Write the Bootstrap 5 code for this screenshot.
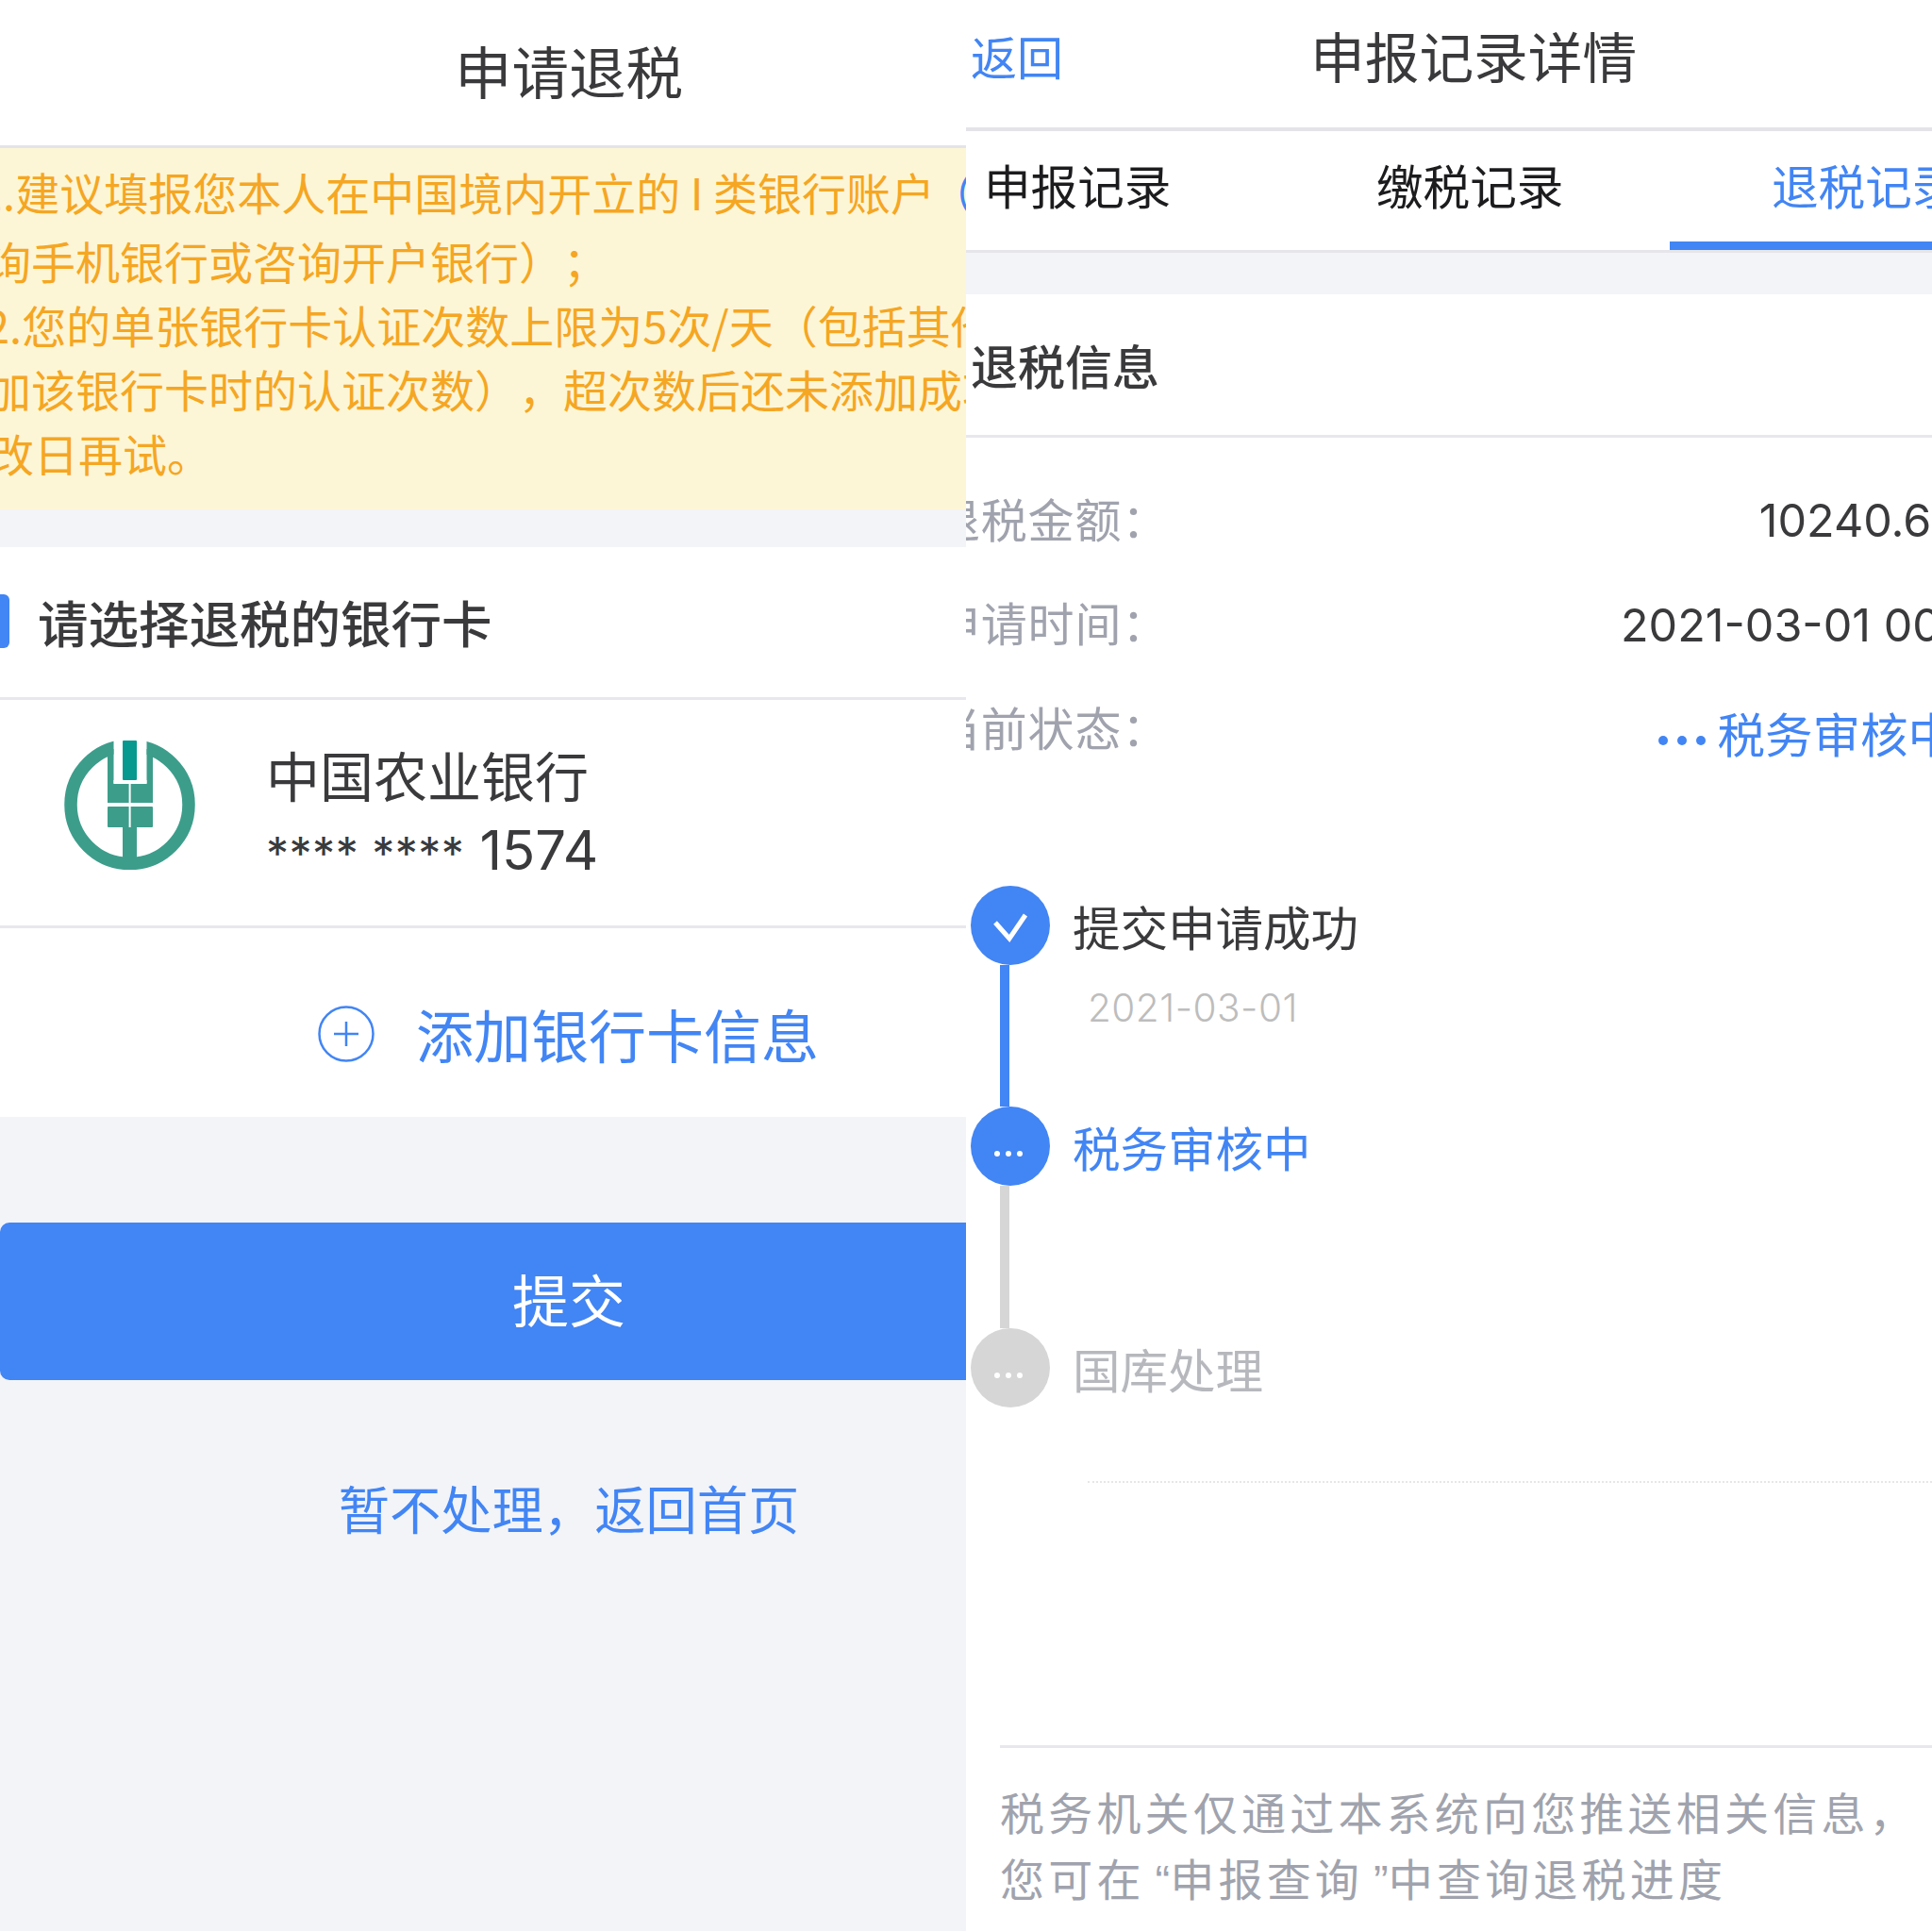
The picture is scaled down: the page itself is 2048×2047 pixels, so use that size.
<!DOCTYPE html>
<html lang="zh">
<head>
<meta charset="utf-8">
<title>申请退税</title>
<link href="https://cdn.jsdelivr.net/npm/bootstrap@5.3.0/dist/css/bootstrap.min.css" rel="stylesheet">
<style>
:root{--blue:#4285f4;--ink:#3a3a3c;--mute:#a0a3ad;--soft:#f3f4f8;--hair:#e8e8ec}
html,body{margin:0;height:2047px;overflow:hidden;background:#fff}
body{font-family:"Noto Sans CJK SC","Noto Sans",sans-serif;color:var(--ink);font-weight:400;text-spacing-trim:space-all}
.pane{width:1024px;height:2047px;overflow:hidden;flex:none}
.pane-l{background:var(--soft)}
.inner-l{width:1206px}
.top-l{height:157px;background:#fff;border-bottom:3px solid #e4e4e8;font-size:60.5px;padding-bottom:6px}
.warn{height:383px;background:#fdf6d6;color:#f5a623;font-size:47px;line-height:68.2px;padding-top:12px;white-space:nowrap}
.warn div:first-child{margin-bottom:4.5px}
.w1{margin-left:-23px}.w2{margin-left:-14px}.w3{margin-left:-16px}.w4{margin-left:-14px}.w5{margin-left:-11px}
.paren{color:var(--blue);margin-left:-16px}
.sect-l{margin-top:40px;height:162px;background:#fff;border-bottom:3px solid var(--hair);font-size:53.5px;font-weight:500}
.tick{width:10px;height:57px;background:var(--blue);border-radius:0 6px 6px 0;margin-right:30px;margin-top:-2px}
.bank{height:242px;background:#fff;border-bottom:3px solid var(--hair);padding-left:68px}
.logo{width:139px;height:138px;margin-right:75px;margin-top:-18px}
.bank-name{font-size:57px;line-height:78px;margin-top:2px}
.bank-no{font-size:58px;line-height:78px;margin-top:3px;font-family:"Inter","Noto Sans CJK SC",sans-serif}
.stars{font-size:48px;letter-spacing:.5px;margin-right:16px}
.add{height:200px;background:#fff;color:var(--blue);font-size:61px;padding-left:337px;padding-top:24px}
.add svg{width:60px;height:60px;margin-right:44px}
.submit{margin-top:112px;height:167px;width:1024px;background:var(--blue);color:#fff;font-size:60px;border:0;border-radius:10px 0 0 10px;padding:0 0 8px 0;display:block}
.submit span{display:block;width:1206px;text-align:center}
.later{margin-top:95px;color:var(--blue);font-size:54.3px;text-align:center;line-height:80px;text-decoration:none;display:block}
.pane-r{background:#fff}
.top-r{height:139px;border-bottom:4px solid #e4e4e8;padding-left:5px;padding-bottom:18px}
.back{color:var(--blue);font-size:49px;width:360px}
.title-r{font-size:57.7px}
.tabs{height:129px;border-bottom:3px solid #e6e6ea;font-size:49.6px;color:#1c1c1e}
.tab{height:126px;padding-bottom:14px}
.t1{width:414px;padding-left:19px;flex:none}
.t2{width:332px;padding-left:21px;flex:none}
.t3{flex:1;color:var(--blue);padding-left:108px;border-bottom:9px solid var(--blue);white-space:nowrap;padding-bottom:5px}
.gap-r{height:44px;background:var(--soft)}
.head-r{height:152px;border-bottom:3px solid var(--hair);padding-left:5px;font-size:50px;font-weight:500}
.inf{height:110.5px;font-size:49px;white-space:nowrap;width:1054px}
.inf-first{margin-top:29px}
.inf-k{color:var(--mute);margin-left:-34px;letter-spacing:.8px}
.inf-v{margin-left:auto;margin-top:9px;font-family:"Inter","Noto Sans CJK SC",sans-serif;font-size:48.5px;font-weight:400}
.inf-date{margin-right:-55px}
.inf-s{color:var(--blue);font-size:50.5px;font-weight:400;font-family:inherit;margin-top:16px;margin-right:5px}
.dots{display:inline-flex;gap:10px;margin-right:13px;vertical-align:middle}
.dots i{width:10px;height:10px;border-radius:50%;background:var(--blue);display:block}
.steps{margin-top:114px;padding-left:5px}
.step{height:234.5px}
.node{width:84px;margin-right:24px;flex:none}
.dot{width:84px;height:84px;border-radius:50%;background:var(--blue);color:#fff}
.dot-off{background:#d6d6d6}
.dot svg{width:44px;height:44px}
.dots2{display:flex;gap:6px;margin-top:16px;margin-left:-5px}
.dots2 i{width:6px;height:6px;border-radius:50%;background:#fff;display:block}
.bar{width:10px;margin-left:31px;flex:1;background:var(--blue)}
.bar-off{background:#d6d6d6}
.step-t{font-size:50.5px;line-height:84px}
.step-d{font-size:40.5px;color:#bdbdbd;margin-left:16px;line-height:50px;margin-top:21px;font-family:"Inter","Noto Sans CJK SC",sans-serif;font-weight:300;letter-spacing:.5px}
.on{color:var(--blue)}
.off{color:#b6b8bd}
.dotted{margin-left:129px;margin-top:78px;border-top:2px dotted #e6e6e6}
.note{margin:278px 0 0 36px;border-top:3px solid var(--hair);padding-top:32px;font-size:47px;line-height:70px;color:var(--mute);letter-spacing:4.2px;white-space:nowrap}
.quo{font-family:"Liberation Sans",sans-serif;letter-spacing:0;padding-left:11px}
</style>
</head>
<body>
<main class="d-flex">
  <section class="pane pane-l">
    <div class="inner-l">
      <div class="top-l d-flex align-items-center justify-content-center">申请退税</div>
    </div>
    <div class="warn">
      <div class="w1">1.建议填报您本人在中国境内开立的 I 类银行账户 <span class="paren">（</span></div>
      <div class="w2">询手机银行或咨询开户银行）；</div>
      <div class="w3">2.您的单张银行卡认证次数上限为5次/天（包括其他</div>
      <div class="w4">加该银行卡时的认证次数），超次数后还未添加成功</div>
      <div class="w5">改日再试。</div>
    </div>
    <div class="sect-l d-flex align-items-center"><span class="tick"></span>请选择退税的银行卡</div>
    <div class="bank d-flex align-items-center">
      <svg class="logo" viewBox="38 23 139 138" aria-hidden="true">
        <circle cx="107.5" cy="92" r="62.5" fill="none" stroke="#3d9d8b" stroke-width="13.5"/>
        <rect x="90.5" y="15" width="35" height="56" fill="#fff"/>
        <rect x="84" y="33" width="6.5" height="38" fill="#3d9d8b"/>
        <rect x="125.5" y="33" width="6.5" height="38" fill="#3d9d8b"/>
        <rect x="100" y="24" width="15" height="42" rx="1" fill="#07998f"/>
        <rect x="84" y="70" width="48" height="20" fill="#3d9d8b"/>
        <rect x="84" y="94" width="48" height="22" rx="1" fill="#3d9d8b"/>
        <rect x="100" y="114" width="15" height="42" fill="#3d9d8b"/>
        <rect x="106.6" y="68" width="2" height="48" fill="#fff"/>
        <rect x="90.5" y="66" width="35" height="3.5" fill="#fff"/>
      </svg>
      <div>
        <div class="bank-name">中国农业银行</div>
        <div class="bank-no"><span class="stars">**** ****</span>1574</div>
      </div>
    </div>
    <div class="add d-flex align-items-center">
      <svg viewBox="0 0 60 60" aria-hidden="true"><circle cx="30" cy="30" r="28.5" fill="none" stroke="#4285f4" stroke-width="2.5"/><path d="M30 17v26M17 30h26" stroke="#4285f4" stroke-width="2.5" fill="none"/></svg>
      添加银行卡信息
    </div>
    <button class="submit" type="button"><span>提交</span></button>
    <a class="later inner-l" href="#">暂不处理，返回首页</a>
  </section>

  <section class="pane pane-r">
    <div class="top-r d-flex align-items-center">
      <a class="back text-decoration-none" href="#">返回</a>
      <span class="title-r">申报记录详情</span>
    </div>
    <div class="tabs d-flex">
      <div class="tab t1 d-flex align-items-center">申报记录</div>
      <div class="tab t2 d-flex align-items-center">缴税记录</div>
      <div class="tab t3 d-flex align-items-center">退税记录</div>
    </div>
    <div class="gap-r"></div>
    <div class="head-r d-flex align-items-center">退税信息</div>
    <div class="inf inf-first d-flex align-items-center"><span class="inf-k">退税金额：</span><span class="inf-v">10240.60</span></div>
    <div class="inf d-flex align-items-center"><span class="inf-k">申请时间：</span><span class="inf-v inf-date">2021-03-01 00:00</span></div>
    <div class="inf d-flex align-items-center"><span class="inf-k">当前状态：</span><span class="inf-v inf-s"><span class="dots"><i></i><i></i><i></i></span>税务审核中</span></div>
    <div class="steps">
      <div class="step d-flex">
        <div class="node d-flex flex-column">
          <div class="dot d-flex align-items-center justify-content-center"><svg viewBox="0 0 44 44" aria-hidden="true"><path d="M6 19l15 17L38 11" fill="none" stroke="#fff" stroke-width="5"/></svg></div>
          <div class="bar"></div>
        </div>
        <div><div class="step-t">提交申请成功</div><div class="step-d">2021-03-01</div></div>
      </div>
      <div class="step d-flex">
        <div class="node d-flex flex-column">
          <div class="dot d-flex align-items-center justify-content-center"><span class="dots2"><i></i><i></i><i></i></span></div>
          <div class="bar bar-off"></div>
        </div>
        <div class="step-t on">税务审核中</div>
      </div>
      <div class="d-flex">
        <div class="node">
          <div class="dot dot-off d-flex align-items-center justify-content-center"><span class="dots2"><i></i><i></i><i></i></span></div>
        </div>
        <div class="step-t off">国库处理</div>
      </div>
    </div>
    <div class="dotted"></div>
    <div class="note">税务机关仅通过本系统向您推送相关信息，<br>您可在<span class="quo">“</span>申报查询<span class="quo">”</span>中查询退税进度</div>
  </section>
</main>
<script src="https://cdn.jsdelivr.net/npm/bootstrap@5.3.0/dist/js/bootstrap.bundle.min.js"></script>
</body>
</html>
